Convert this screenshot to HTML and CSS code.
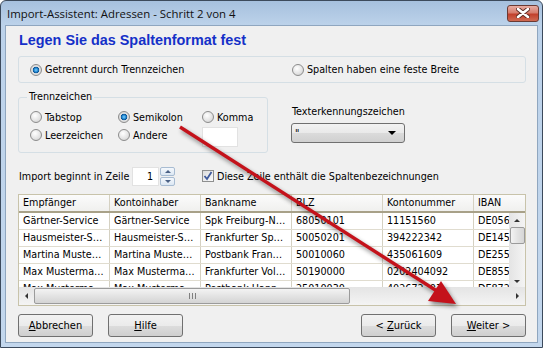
FILE: index.html
```html
<!DOCTYPE html>
<html lang="de">
<head>
    <meta charset="UTF-8">
    <meta name="viewport" content="width=device-width, initial-scale=1.0">
    <title>Import-Assistent</title>
    <link rel="stylesheet" href="styles.css">
</head>
<body>
    <div class="window">
        <div class="titlebar">
            <span class="title">Import-Assistent: Adressen - Schritt 2 von 4</span>
            <div class="close">
                <svg width="14" height="10" viewBox="0 0 14 10">
                    <path d="M2 1 L12 9 M12 1 L2 9" stroke="#5a2a22" stroke-width="4.4" stroke-linecap="round"/>
                    <path d="M2 1 L12 9 M12 1 L2 9" stroke="#fff" stroke-width="2.6" stroke-linecap="round"/>
                </svg>
            </div>
        </div>

        <div class="client">
            <h1 class="heading">Legen Sie das Spaltenformat fest</h1>

            <div class="mode-box">
                <label class="opt"><span class="radio checked"></span>Getrennt durch Trennzeichen</label>
                <label class="opt"><span class="radio"></span>Spalten haben eine feste Breite</label>
            </div>

            <div class="options">
                <fieldset class="sep-box">
                    <legend>Trennzeichen</legend>
                    <div class="sep-grid">
                        <label class="opt"><span class="radio"></span>Tabstop</label>
                        <label class="opt"><span class="radio checked"></span>Semikolon</label>
                        <label class="opt"><span class="radio"></span>Komma</label>
                        <label class="opt"><span class="radio"></span>Leerzeichen</label>
                        <label class="opt"><span class="radio"></span>Andere</label>
                        <div class="textbox other"></div>
                    </div>
                </fieldset>

                <div class="quote">
                    <div class="quote-label">Texterkennungszeichen</div>
                    <div class="combo"><span>"</span><span class="caret"></span></div>
                </div>
            </div>

            <div class="start-row">
                <span class="start-label">Import beginnt in Zeile</span>
                <div class="textbox number">1</div>
                <div class="spinner">
                    <span class="spin up"></span>
                    <span class="spin down"></span>
                </div>
                <label class="opt check-opt">
                    <span class="checkbox">
                        <svg width="10" height="10" viewBox="0 0 10 10">
                            <path d="M1.5 5 L4 8 L8.5 1" fill="none" stroke="#3f5a9c" stroke-width="1.8"/>
                        </svg>
                    </span>Diese Zeile enthält die Spaltenbezeichnungen
                </label>
            </div>

            <div class="grid">
                <div class="grid-head">
                    <div class="cell">Empfänger</div>
                    <div class="cell">Kontoinhaber</div>
                    <div class="cell">Bankname</div>
                    <div class="cell">BLZ</div>
                    <div class="cell">Kontonummer</div>
                    <div class="cell">IBAN</div>
                </div>
                <div class="grid-body">
                    <div class="row">
                        <div class="cell">Gärtner-Service</div>
                        <div class="cell">Gärtner-Service</div>
                        <div class="cell">Spk Freiburg-Nördlicher Breisgau</div>
                        <div class="cell">68050101</div>
                        <div class="cell">11151560</div>
                        <div class="cell">DE05680501010011151560</div>
                    </div>
                    <div class="row">
                        <div class="cell">Hausmeister-Service GmbH</div>
                        <div class="cell">Hausmeister-Service GmbH</div>
                        <div class="cell">Frankfurter Sparkasse</div>
                        <div class="cell">50050201</div>
                        <div class="cell">394222342</div>
                        <div class="cell">DE14500502010394222342</div>
                    </div>
                    <div class="row">
                        <div class="cell">Martina Mustermann</div>
                        <div class="cell">Martina Mustermann</div>
                        <div class="cell">Postbank Frankfurt</div>
                        <div class="cell">50010060</div>
                        <div class="cell">435061609</div>
                        <div class="cell">DE25500100600435061609</div>
                    </div>
                    <div class="row">
                        <div class="cell">Max Mustermann</div>
                        <div class="cell">Max Mustermann</div>
                        <div class="cell">Frankfurter Volksbank</div>
                        <div class="cell">50190000</div>
                        <div class="cell">0202404092</div>
                        <div class="cell">DE85501900000202404092</div>
                    </div>
                    <div class="row">
                        <div class="cell">Max Mustermann</div>
                        <div class="cell">Max Mustermann</div>
                        <div class="cell">Postbank Hannover</div>
                        <div class="cell">25010030</div>
                        <div class="cell">402672303</div>
                        <div class="cell">DE87250100300402672303</div>
                    </div>
                </div>
                <div class="vscroll">
                    <span class="arr arr-up"></span>
                    <span class="vthumb"></span>
                    <span class="arr arr-down"></span>
                </div>
                <div class="hscroll">
                    <span class="arr arr-left"></span>
                    <span class="hthumb"><span class="grip"></span></span>
                    <span class="arr arr-right"></span>
                </div>
            </div>

            <div class="buttons">
                <button class="btn"><u>A</u>bbrechen</button>
                <button class="btn"><u>H</u>ilfe</button>
                <span class="spacer"></span>
                <button class="btn">&lt; <u>Z</u>urück</button>
                <button class="btn"><u>W</u>eiter &gt;</button>
            </div>
        </div>
    </div>

    <svg class="arrow" width="543" height="348" viewBox="0 0 543 348">
        <line x1="180" y1="127" x2="440" y2="293" stroke="#c4121b" stroke-width="3.4"/>
        <polygon points="456,304 428,301 441,281" fill="#c4121b"/>
    </svg>
</body>
</html>
```

FILE: styles.css
```css
* {
    box-sizing: border-box;
}

body {
    margin: 0;
    width: 543px;
    height: 348px;
    overflow: hidden;
    position: relative;
    background: #fff;
    font-family: "DejaVu Sans Condensed", "DejaVu Sans", sans-serif;
    font-size: 10.7px;
    color: #000;
}

.window {
    width: 543px;
    height: 348px;
    border: 1px solid #3c4a5c;
    border-radius: 6px 6px 0 0;
    background: linear-gradient(#a6c0de, #bcd2ea 24px, #c3d7ed);
    display: flex;
    flex-direction: column;
}

.titlebar {
    height: 24px;
    flex: none;
    display: flex;
    align-items: center;
    padding-left: 6px;
}

.title {
    font-family: "Open Sans", "Noto Sans", sans-serif;
    font-size: 11.4px;
    color: #111;
}

.close {
    margin-left: auto;
    margin-right: 3px;
    width: 32px;
    height: 17px;
    border: 1px solid #6b3a33;
    border-radius: 3px;
    background: linear-gradient(#e8aca2, #d67d6d 45%, #c2402c 55%, #cf6a52);
    display: flex;
    align-items: center;
    justify-content: center;
}

.client {
    flex: 1;
    margin: 0 4px 4px;
    background: #f0f0f0;
    border: 1px solid #8fa6bf;
    padding: 4px 11px 4px 12px;
    display: flex;
    flex-direction: column;
}

.heading {
    margin: 0;
    padding-left: 1px;
    height: 20px;
    line-height: 20px;
    font-family: "Liberation Sans", sans-serif;
    font-size: 14.4px;
    font-weight: bold;
    color: #1530c8;
}

.opt {
    display: flex;
    align-items: center;
    gap: 3px;
    white-space: nowrap;
}

.radio {
    width: 12px;
    height: 12px;
    flex: none;
    border-radius: 50%;
    border: 1px solid #8c8c8c;
    background: radial-gradient(circle at 40% 35%, #ffffff, #e2e2e2 60%, #c9c9c9);
}

.radio.checked {
    background: radial-gradient(circle, #7fd0ff 0, #1f86d0 2px, #0b4f8e 3px, #e4e4e4 3.6px, #c9c9c9);
}

.mode-box {
    margin-top: 6px;
    height: 27px;
    border: 1px solid #d5dfe5;
    border-radius: 3px;
    display: grid;
    grid-template-columns: 262px 1fr;
    align-items: center;
    padding-left: 11px;
}

.options {
    margin-top: 7px;
    display: flex;
    gap: 23px;
}

.sep-box {
    margin: 0;
    width: 250px;
    height: 63px;
    border: 1px solid #d5dfe5;
    border-radius: 3px;
    padding: 0 0 0 11px;
}

.sep-box legend {
    padding: 0 2px;
    margin-left: -3px;
    line-height: 14px;
}

.sep-grid {
    margin-top: 4px;
    display: grid;
    grid-template-columns: 88px 84px 1fr;
    grid-template-rows: 18px 18px;
}

.textbox {
    background: #fff;
    border: 1px solid #e2e2e2;
}

.textbox.other {
    width: 36px;
    height: 20px;
    margin-top: 1px;
}

.quote {
    padding-top: 15px;
}

.quote-label {
    line-height: 14px;
    padding-left: 1px;
}

.combo {
    margin-top: 4px;
    width: 114px;
    height: 20px;
    border: 1px solid #707070;
    border-radius: 3px;
    background: linear-gradient(#f3f3f3, #e9e9e9 50%, #dbdbdb 50%, #d0d0d0);
    display: flex;
    align-items: center;
    justify-content: space-between;
    padding: 0 8px 0 3px;
}

.caret {
    width: 0;
    height: 0;
    border-left: 4px solid transparent;
    border-right: 4px solid transparent;
    border-top: 4px solid #000;
}

.start-row {
    margin-top: 13px;
    height: 20px;
    display: flex;
    align-items: center;
    white-space: nowrap;
}

.start-label {
    padding-left: 1px;
    width: 114px;
}

.textbox.number {
    width: 27px;
    height: 19px;
    text-align: right;
    padding-right: 5px;
    line-height: 17px;
}

.spinner {
    width: 15px;
    height: 19px;
    margin-left: 1px;
    display: flex;
    flex-direction: column;
    gap: 1px;
}

.spin {
    flex: 1;
    border: 1px solid #a8bcd2;
    border-radius: 2px;
    background: linear-gradient(#f4f8fc, #dce7f3);
    display: flex;
    align-items: center;
    justify-content: center;
}

.spin::after {
    content: "";
    border-left: 3px solid transparent;
    border-right: 3px solid transparent;
}

.spin.up::after {
    border-bottom: 3px solid #4b6185;
}

.spin.down::after {
    border-top: 3px solid #4b6185;
}

.check-opt {
    margin-left: 27px;
}

.checkbox {
    width: 12px;
    height: 12px;
    flex: none;
    border: 1px solid #8e8f8f;
    background: linear-gradient(135deg, #dcdcdc, #fbfbfb);
    display: flex;
    align-items: center;
    justify-content: center;
}

.grid {
    margin-top: 8px;
    height: 112px;
    border: 1px solid #c8c3aa;
    background: #fff;
    display: grid;
    grid-template-columns: minmax(0, 1fr) 16px;
    grid-template-rows: 18px 74px 18px;
    overflow: hidden;
}

.grid-head {
    grid-column: 1 / 3;
    display: grid;
    grid-template-columns: repeat(6, 91px);
    background: linear-gradient(#fbfbfb, #f0f0ee);
    border-bottom: 2px solid #a8a188;
    overflow: hidden;
}

.cell {
    padding: 0 4px;
    line-height: 16px;
    border-right: 1px solid #d5d1c2;
    white-space: nowrap;
    overflow: hidden;
    text-overflow: ellipsis;
}

.grid-body {
    overflow: hidden;
}

.grid-body .cell:nth-child(6) {
    text-overflow: clip;
}

.row {
    display: grid;
    grid-template-columns: repeat(6, 91px);
    height: 17px;
    border-bottom: 1px solid #e0dccf;
}

.vscroll {
    background: linear-gradient(90deg, #e4e4e4, #f4f4f4);
    display: flex;
    flex-direction: column;
    align-items: center;
    padding: 6px 0 0;
}

.vthumb {
    margin-top: 5px;
    width: 15px;
    height: 17px;
    border: 1px solid #9b9b9b;
    border-radius: 2px;
    background: linear-gradient(90deg, #f3f3f3, #e3e3e3 50%, #d6d6d6);
}

.hscroll {
    grid-column: 1 / 3;
    background: linear-gradient(#e4e4e4, #f4f4f4);
    display: flex;
    align-items: center;
    padding: 0 6px;
}

.hthumb {
    margin-left: 6px;
    width: 316px;
    height: 16px;
    border: 1px solid #9b9b9b;
    border-radius: 2px;
    background: linear-gradient(#f3f3f3, #e3e3e3 50%, #d4d4d4);
    display: flex;
    align-items: center;
    justify-content: center;
}

.grip {
    width: 7px;
    height: 6px;
    background: repeating-linear-gradient(90deg, #808080 0 1px, transparent 1px 3px);
}

.arr {
    width: 0;
    height: 0;
}

.arr-up {
    border-left: 3px solid transparent;
    border-right: 3px solid transparent;
    border-bottom: 3px solid #333;
}

.arr-down {
    margin-top: auto;
    margin-bottom: 4px;
    border-left: 3px solid transparent;
    border-right: 3px solid transparent;
    border-top: 3px solid #333;
}

.arr-left {
    border-top: 3px solid transparent;
    border-bottom: 3px solid transparent;
    border-right: 3px solid #333;
}

.arr-right {
    margin-left: auto;
    border-top: 3px solid transparent;
    border-bottom: 3px solid transparent;
    border-left: 3px solid #333;
}

.buttons {
    margin-top: 8px;
    display: flex;
    gap: 15px;
}

.spacer {
    flex: 1;
}

.btn {
    width: 75px;
    height: 23px;
    padding: 0;
    border: 1px solid #707070;
    border-radius: 3px;
    background: linear-gradient(#f2f2f2, #ebebeb 50%, #dddddd 50%, #cfcfcf);
    font-family: inherit;
    font-size: 11px;
    color: #000;
}

.arrow {
    position: absolute;
    left: 0;
    top: 0;
    pointer-events: none;
    filter: drop-shadow(2px 3px 2px rgba(0, 0, 0, 0.45));
}
```
